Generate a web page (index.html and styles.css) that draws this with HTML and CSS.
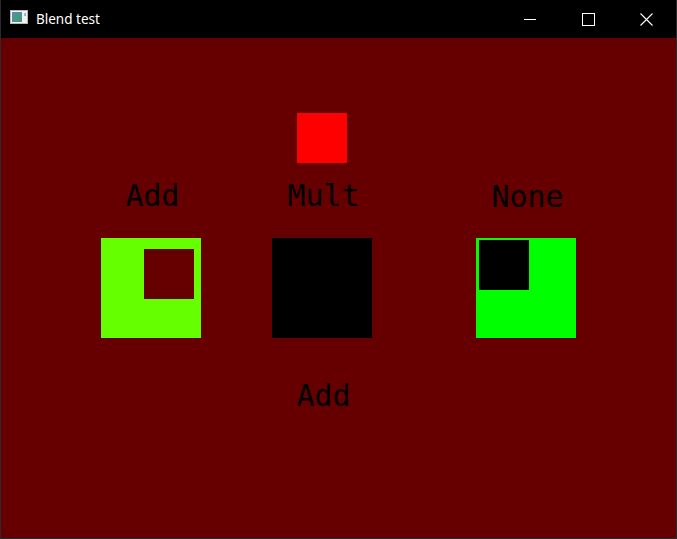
FILE: index.html
```html
<!DOCTYPE html>
<html>
<head>
<meta charset="utf-8">
<link rel="stylesheet" href="styles.css">
</head>
<body>
<div class="window">
  <div class="titlebar">
    <svg class="app-icon" width="18" height="14" viewBox="0 0 18 14">
      <defs>
        <linearGradient id="g" x1="0" y1="0" x2="1" y2="1">
          <stop offset="0" stop-color="#5a8fb0"/>
          <stop offset="1" stop-color="#3d9a6a"/>
        </linearGradient>
      </defs>
      <rect x="0.5" y="0.5" width="17" height="13" fill="#f2f2f2" stroke="#b8b8b8"/>
      <rect x="2" y="2" width="10" height="10" fill="url(#g)"/>
      <rect x="14.5" y="3" width="1.2" height="3" fill="#5b8fc9"/>
    </svg>
    <span class="title">Blend test</span>
    <div class="controls">
      <div class="ctl">
        <svg width="12" height="12" viewBox="0 0 12 12"><line x1="0" y1="5.5" x2="12" y2="5.5" stroke="#fff" stroke-width="1"/></svg>
      </div>
      <div class="ctl">
        <svg width="13" height="13" viewBox="0 0 13 13"><rect x="0.5" y="0.5" width="12" height="12" fill="none" stroke="#fff" stroke-width="1"/></svg>
      </div>
      <div class="ctl">
        <svg width="13" height="13" viewBox="0 0 13 13"><path d="M0.5 0.5 L12.5 12.5 M12.5 0.5 L0.5 12.5" stroke="#fff" stroke-width="1.1"/></svg>
      </div>
    </div>
  </div>
  <div class="canvas">
    <div class="row">
      <div class="col2 center"><div class="sq-red"></div></div>
    </div>
    <div class="row labels">
      <div class="col1 label">Add</div>
      <div class="col2 label">Mult</div>
      <div class="col3 label low">None</div>
    </div>
    <div class="row squares">
      <div class="col1"><div class="big add"><div class="inner inner-red"></div></div></div>
      <div class="col2"><div class="big mult"></div></div>
      <div class="col3"><div class="big none"><div class="inner inner-black"></div></div></div>
    </div>
    <div class="row bottom">
      <div class="col2 label">Add</div>
    </div>
  </div>
</div>
</body>
</html>
```

FILE: styles.css
```css
html, body {
  margin: 0;
  padding: 0;
  background: #000;
}
.window {
  width: 677px;
  height: 539px;
  box-sizing: border-box;
  border-left: 1px solid #2b2b2b;
  border-right: 1px solid #2b2b2b;
  border-bottom: 1px solid #2b2b2b;
  background: #000;
  display: flex;
  flex-direction: column;
}
.titlebar {
  height: 38px;
  flex: none;
  display: flex;
  align-items: flex-start;
  background: #000;
  font-family: "Noto Sans", "Open Sans", sans-serif;
}
.app-icon {
  margin: 10px 0 0 9px;
  display: block;
}
.title {
  color: #fff;
  font-size: 13.5px;
  line-height: 18px;
  margin: 10px 0 0 8px;
}
.controls {
  margin-left: auto;
  display: flex;
}
.ctl {
  width: 46px;
  height: 38px;
  display: flex;
  align-items: center;
  justify-content: center;
}
.ctl:nth-child(1) { width: 58px; padding-top: 1px; box-sizing: border-box; }
.ctl:nth-child(2) { width: 58px; }
.ctl:nth-child(3) { width: 59px; }
.ctl svg { display: block; }

.canvas {
  flex: 1;
  background: #660000;
  padding-top: 75px;
}
.row {
  display: grid;
  grid-template-columns: 100px 71px 100px 104px 100px;
  padding-left: 100px;
}
.col1 { grid-column: 1; }
.col2 { grid-column: 3; }
.col3 { grid-column: 5; }
.center { display: flex; justify-content: center; }
.sq-red {
  width: 50px;
  height: 50px;
  background: #ff0000;
}
.labels { margin-top: 15px; }
.label {
  font-family: "DejaVu Sans Mono", monospace;
  font-size: 30px;
  line-height: 36px;
  height: 36px;
  color: #000;
  text-align: center;
  white-space: nowrap;
  padding-left: 3px;
}
.label.low { padding-top: 1px; }
.squares { margin-top: 23px; }
.big {
  width: 100px;
  height: 100px;
  box-sizing: border-box;
}
.add {
  background: #66ff00;
  padding: 11px 0 0 43px;
}
.mult { background: #000; }
.none {
  background: #00ff00;
  padding: 2px 0 0 3px;
}
.inner { width: 50px; height: 50px; }
.inner-red { background: #660000; }
.inner-black { background: #000; }
.bottom { margin-top: 40px; }
```
